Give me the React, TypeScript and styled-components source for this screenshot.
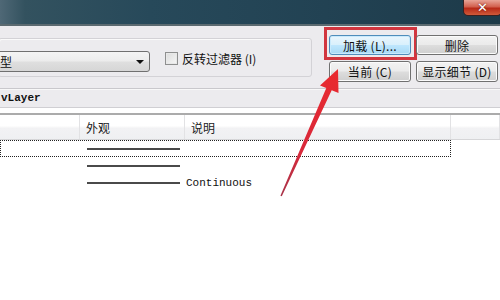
import React from "react";
import styled, { createGlobalStyle } from "styled-components";

const Global = createGlobalStyle`
  html, body { margin: 0; padding: 0; }
  body {
    width: 500px; height: 300px; overflow: hidden; background: #ffffff;
    font-family: "Noto Sans CJK SC", "Noto Sans", sans-serif;
  }
`;

const Frame = styled.div`
  position: relative;
  width: 500px;
  height: 300px;
  overflow: hidden;
  background: #ffffff;
  display: flex;
  flex-direction: column;
`;

const TitleBar = styled.div`
  height: 24px;
  flex: none;
  display: flex;
  justify-content: flex-end;
  align-items: flex-start;
  background: linear-gradient(90deg, #4f6876 0%, #33525f 5%, #27495a 30%, #224253 65%, #1d3a49 100%);
  border-bottom: 2px solid #5b6a70;
  box-shadow: 0 1px 0 #909a9e;
`;

const CloseButton = styled.div`
  width: 37px;
  height: 15px;
  margin-right: -2px;
  border: 1px solid #3a2020;
  border-top: none;
  border-radius: 0 0 5px 5px;
  background: linear-gradient(180deg, #e8a497 0%, #d2604e 45%, #b82a18 55%, #cf5a3a 100%);
  display: flex;
  align-items: center;
  justify-content: center;
  color: #ffffff;
  font-family: "DejaVu Sans", sans-serif;
  font-weight: bold;
  font-size: 13px;
  line-height: 1;
  text-shadow: 0 0 2px #5a0f08;
`;

const Body = styled.div`
  background: #ecebee;
  flex: none;
  display: flex;
  flex-direction: column;
  padding-top: 1px;
`;

const TopSection = styled.div`
  display: flex;
  height: 61px;
`;

const FilterGroup = styled.div`
  margin-top: 11px;
  margin-left: -2px;
  width: 314px;
  height: 39px;
  border: 1px solid #d3d2d6;
  border-radius: 3px;
  box-shadow: inset 1px 1px 0 #fafafa;
  display: flex;
  align-items: flex-start;
  padding-top: 12px;
  box-sizing: border-box;
`;

const Dropdown = styled.div`
  margin-left: -6px;
  width: 157px;
  height: 21px;
  box-sizing: border-box;
  border: 1px solid #707070;
  border-radius: 3px;
  background: linear-gradient(180deg, #f4f4f4 0%, #ececec 48%, #dfdfdf 52%, #d6d6d6 100%);
  display: flex;
  align-items: center;
  justify-content: space-between;
  padding: 0 5px 0 6px;
  font-size: 12px;
  color: #111;
`;

const DropArrow = styled.span`
  width: 0;
  height: 0;
  border-left: 4px solid transparent;
  border-right: 4px solid transparent;
  border-top: 4px solid #111;
`;

const CheckRow = styled.label`
  display: flex;
  align-items: center;
  margin-left: 15px;
  margin-top: 1px;
  font-size: 12px;
  color: #111;
  gap: 4px;
  height: 13px;
`;

const CheckBox = styled.span`
  width: 11px;
  height: 11px;
  border: 1px solid #8e8f8f;
  background: linear-gradient(135deg, #dcdcdc 0%, #f6f6f6 100%);
  box-shadow: inset 0 0 0 1px #e8e8e8;
`;

const ButtonGrid = styled.div`
  margin-left: 17px;
  margin-top: 8px;
  display: grid;
  grid-template-columns: 82px 82px;
  grid-template-rows: 20px 21px;
  column-gap: 5px;
  row-gap: 6px;
`;

const Button = styled.div<{ $focused?: boolean }>`
  position: relative;
  box-sizing: border-box;
  border: 1px solid ${(p) => (p.$focused ? "#4f8dbb" : "#707070")};
  border-radius: 3px;
  background: ${(p) =>
    p.$focused
      ? "linear-gradient(180deg, #eaf6fd 0%, #d9f0fc 48%, #bee6fd 52%, #a7d9f5 100%)"
      : "linear-gradient(180deg, #f2f2f2 0%, #ebebeb 48%, #dddddd 52%, #cfcfcf 100%)"};
  box-shadow: inset 0 0 0 1px ${(p) => (p.$focused ? "#c9eafc" : "#fbfbfb")};
  display: flex;
  align-items: center;
  justify-content: center;
  font-size: 12px;
  color: #111;
  white-space: nowrap;
  letter-spacing: 0.3px;
`;

const Highlight = styled.span`
  position: absolute;
  left: -6px;
  right: -7px;
  top: -9px;
  bottom: -6px;
  border: 3px solid #d1363f;
  pointer-events: none;
`;

const CurrentRow = styled.div`
  height: 18px;
  border-top: 1px solid #c9c8cc;
  border-bottom: 1px solid #d0cfd3;
  box-shadow: inset 0 1px 0 #f8f8f8;
  display: flex;
  align-items: center;
  padding-left: 1px;
`;

const MonoText = styled.span<{ $bold?: boolean }>`
  font-family: "Liberation Mono", "DejaVu Sans Mono", monospace;
  font-size: 11px;
  font-weight: ${(p) => (p.$bold ? 600 : 400)};
  color: #111;
  white-space: nowrap;
`;

const ListView = styled.div`
  margin-top: 5px;
  border-top: 2px solid #ababab;
  background: #ffffff;
  flex: 1;
  display: flex;
  flex-direction: column;
`;

const cols = "80px 105px 266px 1fr";

const Header = styled.div`
  height: 24px;
  display: grid;
  grid-template-columns: ${cols};
  border-bottom: 1px solid #d6d6d8;
  background: linear-gradient(180deg, #ffffff 0%, #ffffff 45%, #f2f2f4 55%, #eff0f2 100%);
`;

const HeaderCell = styled.div`
  border-right: 1px solid #e2e2e4;
  display: flex;
  align-items: center;
  padding-left: 6px;
  font-size: 12px;
  color: #222;
`;

const Row = styled.div<{ $focus?: boolean }>`
  width: 451px;
  height: 17px;
  box-sizing: border-box;
  display: grid;
  grid-template-columns: 80px 105px 1fr;
  border: 1px dotted ${(p) => (p.$focus ? "#222" : "transparent")};
`;

const Cell = styled.div`
  display: flex;
  align-items: center;
`;

const LineSample = styled.div`
  margin-left: 6px;
  width: 93px;
  height: 2px;
  background: #4a4a4a;
`;

const Arrow = styled.svg`
  position: absolute;
  left: 0;
  top: 0;
  pointer-events: none;
`;

const rows = [
  { focus: true, text: "" },
  { focus: false, text: "" },
  { focus: false, text: "Continuous" },
];

export default function App() {
  return (
    <>
      <Global />
      <Frame>
        <TitleBar>
          <CloseButton>✕</CloseButton>
        </TitleBar>
        <Body>
          <TopSection>
            <FilterGroup>
              <Dropdown>
                <span>型</span>
                <DropArrow />
              </Dropdown>
              <CheckRow>
                <CheckBox />
                <span>反转过滤器 (I)</span>
              </CheckRow>
            </FilterGroup>
            <ButtonGrid>
              <Button $focused>
                加载 (L)...
                <Highlight />
              </Button>
              <Button>删除</Button>
              <Button>当前 (C)</Button>
              <Button>显示细节 (D)</Button>
            </ButtonGrid>
          </TopSection>
          <CurrentRow>
            <MonoText $bold>vLayer</MonoText>
          </CurrentRow>
        </Body>
        <ListView>
          <Header>
            <HeaderCell />
            <HeaderCell>外观</HeaderCell>
            <HeaderCell>说明</HeaderCell>
            <HeaderCell />
          </Header>
          {rows.map((r, i) => (
            <Row key={i} $focus={r.focus}>
              <Cell />
              <Cell>
                <LineSample />
              </Cell>
              <Cell>
                <MonoText>{r.text}</MonoText>
              </Cell>
            </Row>
          ))}
        </ListView>
        <Arrow width="500" height="300" viewBox="0 0 500 300">
          <defs>
            <linearGradient id="ag" x1="281" y1="196" x2="338" y2="69" gradientUnits="userSpaceOnUse">
              <stop offset="0" stopColor="#a8344a" />
              <stop offset="0.35" stopColor="#d8283a" />
              <stop offset="1" stopColor="#ea2a2e" />
            </linearGradient>
          </defs>
          <polygon
            points="280.4,195.7 326.3,88 320,85.5 338,69 338.5,93 331.7,90.2 281.8,196.3"
            fill="url(#ag)"
          />
        </Arrow>
      </Frame>
    </>
  );
}
